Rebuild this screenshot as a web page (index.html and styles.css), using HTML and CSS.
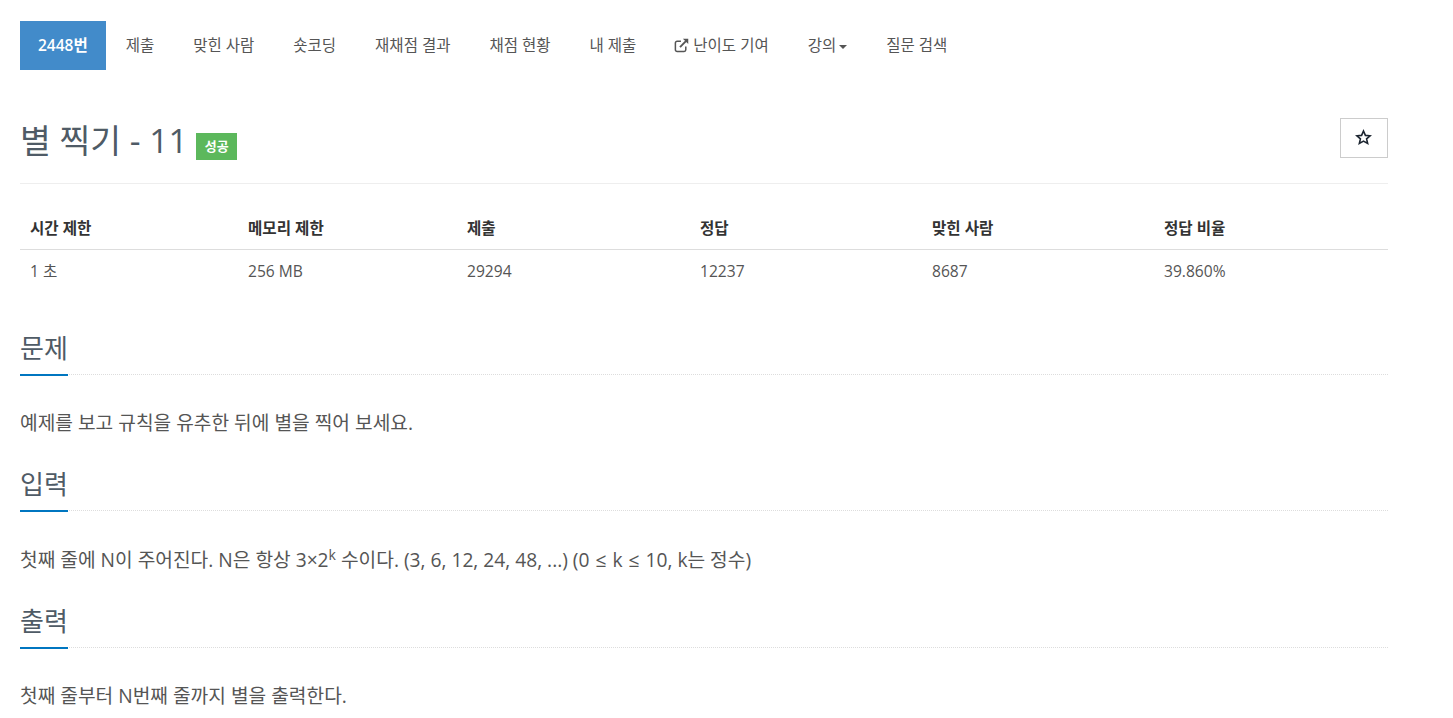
FILE: index.html
```html
<!DOCTYPE html>
<html lang="ko">
<head>
<meta charset="utf-8">
<title>별 찍기 - 11</title>
<link rel="stylesheet" href="styles.css">
</head>
<body>
<div class="page">
  <ul class="tabs">
    <li class="tab active"><a href="#">2448번</a></li>
    <li class="tab"><a href="#">제출</a></li>
    <li class="tab"><a href="#">맞힌 사람</a></li>
    <li class="tab"><a href="#">숏코딩</a></li>
    <li class="tab"><a href="#">재채점 결과</a></li>
    <li class="tab"><a href="#">채점 현황</a></li>
    <li class="tab"><a href="#">내 제출</a></li>
    <li class="tab"><a href="#"><svg class="ext-icon" viewBox="0 0 14 14" width="15" height="15" aria-hidden="true"><path d="M11 8v3a1.6 1.6 0 0 1-1.6 1.6H2.9A1.6 1.6 0 0 1 1.3 11V4.6A1.6 1.6 0 0 1 2.9 3h3.6" fill="none" stroke="currentColor" stroke-width="1.4"/><path d="M5.6 8.5 11.6 2.5" fill="none" stroke="currentColor" stroke-width="1.8"/><path d="M8.3.7h5v5z" fill="currentColor"/></svg> 난이도 기여</a></li>
    <li class="tab"><a href="#">강의<span class="caret"></span></a></li>
    <li class="tab"><a href="#">질문 검색</a></li>
  </ul>

  <div class="page-header">
    <h1 class="title">별 찍기 - 11 <span class="label">성공</span></h1>
    <button class="star-btn" type="button" aria-label="즐겨찾기"><svg viewBox="0 0 16 16" width="17" height="17" aria-hidden="true"><path d="M8 1.9 9.8 6l4.400.4-3.300 2.900 1 4.300L8 11.400l-3.900 2.200 1-4.300L1.800 6.400 6.200 6z" fill="none" stroke="#1c2530" stroke-width="1.5" stroke-linejoin="miter"/></svg></button>
  </div>

  <table class="info">
    <colgroup>
      <col class="c1"><col class="c2"><col class="c3"><col class="c4"><col class="c4"><col class="c4">
    </colgroup>
    <thead>
      <tr><th>시간 제한</th><th>메모리 제한</th><th>제출</th><th>정답</th><th>맞힌 사람</th><th>정답 비율</th></tr>
    </thead>
    <tbody>
      <tr><td>1 초</td><td>256 MB</td><td>29294</td><td>12237</td><td>8687</td><td>39.860%</td></tr>
    </tbody>
  </table>

  <section class="section first">
    <h2 class="headline"><span>문제</span></h2>
    <p class="text">예제를 보고 규칙을 유추한 뒤에 별을 찍어 보세요.</p>
  </section>
  <section class="section">
    <h2 class="headline"><span>입력</span></h2>
    <p class="text text-tall">첫째 줄에 N이 주어진다. N은 항상 3×2<sup>k</sup> 수이다. (3, 6, 12, 24, 48, ...) (0 <span class="op">≤</span> k <span class="op">≤</span> 10, k는 정수)</p>
  </section>
  <section class="section">
    <h2 class="headline"><span>출력</span></h2>
    <p class="text">첫째 줄부터 N번째 줄까지 별을 출력한다.</p>
  </section>
</div>
</body>
</html>
```
FILE: styles.css
```css
* { box-sizing: border-box; }
html, body { margin: 0; padding: 0; background: #fff; overflow: hidden; height: 718px; }
body {
  font-family: "Open Sans", "Noto Sans CJK KR", sans-serif;
  font-size: 15.5px;
  line-height: 20px;
  color: #555;
}
.page { width: 1368px; margin-left: 20px; padding-top: 21px; }

.tabs { display: flex; list-style: none; margin: 0; padding: 0; height: 49px; }
.tab a {
  display: block;
  height: 49px;
  padding: 14px 19.500px;
  color: #555;
  text-decoration: none;
  white-space: nowrap;
}
.tab:nth-child(2) a { padding-left: 20px; }
.tab.active a { background: #428bca; color: #fff; font-weight: 600; padding: 14px 18px; }
.ext-icon { vertical-align: -2px; color: #555; margin-left: -1px; }
.caret {
  display: inline-block;
  width: 0; height: 0;
  margin-left: 3px;
  vertical-align: middle;
  border-top: 4px solid #555;
  border-left: 4.500px solid transparent;
  border-right: 4.500px solid transparent;
}

.page-header {
  display: flex;
  justify-content: space-between;
  align-items: flex-start;
  margin-top: 48px;
  height: 66px;
  border-bottom: 1px solid #eee;
}
.title {
  margin: 0;
  font-size: 33.5px;
  line-height: 44px;
  font-weight: 400;
  color: #4f5b66;
  white-space: nowrap;
}
.label {
  display: inline-block;
  height: 27px;
  padding: 0 8.500px;
  background: #5cb85c;
  color: #fff;
  font-size: 13px;
  line-height: 27px;
  font-weight: 700;
  position: relative;
  top: -2px;
}
.star-btn {
  width: 48px;
  height: 40px;
  padding: 0 1px 2px 0;
  background: #fff;
  border: 1px solid #ccc;
  display: flex;
  align-items: center;
  justify-content: center;
}

.info { width: 1368px; margin-top: 23px; border-collapse: collapse; table-layout: fixed; }
.c1 { width: 220px; }
.c2 { width: 219px; }
.c3 { width: 233px; }
.c4 { width: 232px; }
.info th, .info td { padding: 8px; text-align: left; line-height: 26px; font-size: 15.600px; }
.info th:first-child, .info td:first-child { padding-left: 10px; }
.info th { font-weight: 700; color: #333; border-bottom: 1px solid #ddd; height: 42px; padding-top: 8px; }
.info td { color: #555; height: 44px; padding-top: 7px; }

.section.first { margin-top: 37px; }
.section { margin-top: 0; }
.headline {
  margin: 0;
  height: 44px;
  font-size: 26px;
  line-height: 34px;
  font-weight: 400;
  color: #4f5b66;
  border-bottom: 1px dotted #ddd;
  position: relative;
  white-space: nowrap;
}
.headline span {
  display: inline-block;
  height: 45px;
  border-bottom: 2px solid #0076c0;
  min-width: 48px;
}
.text {
  margin: 0;
  height: 92px;
  padding-top: 33px;
  font-size: 19.200px;
  line-height: 30px;
  color: #555;
  white-space: nowrap;
}
.text-tall { height: 93px; padding-top: 34px; }
.op { margin: 0 1px; }
.text sup { font-size: 14px; line-height: 0; vertical-align: baseline; position: relative; top: -7px; }
```
